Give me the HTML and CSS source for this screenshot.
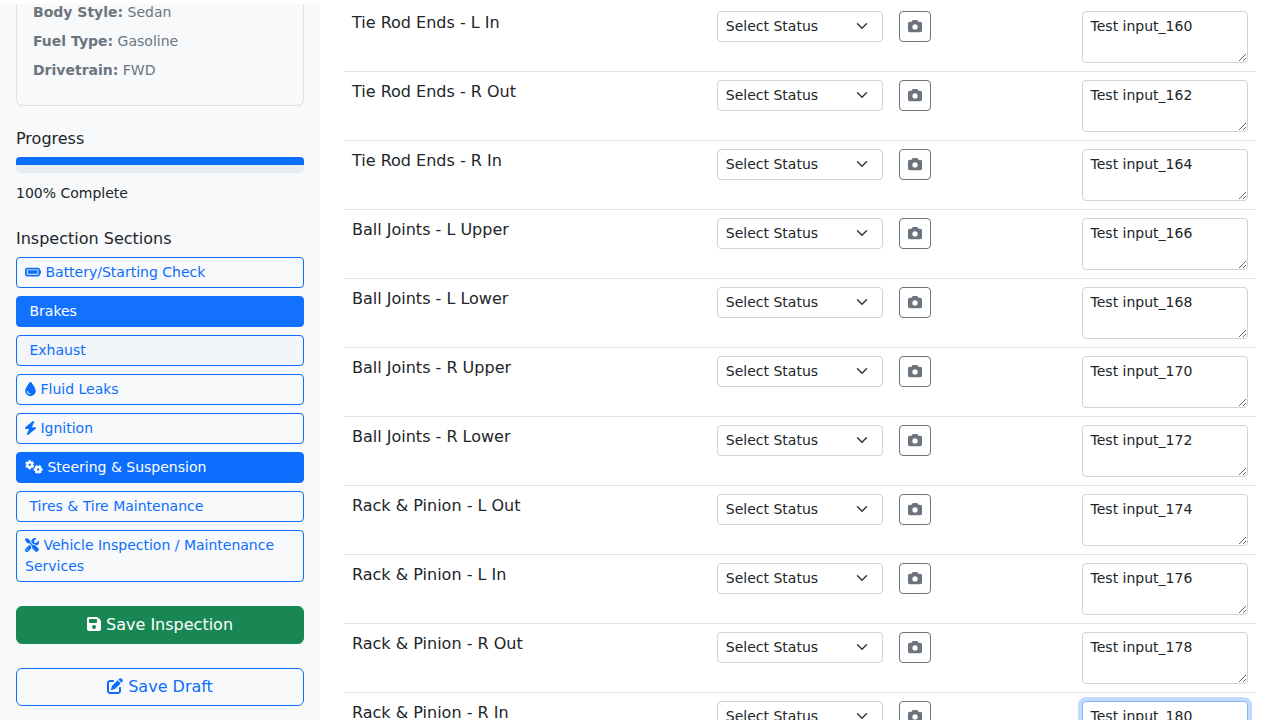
FILE: index.html
```html
<!DOCTYPE html>
<html lang="en">
<head>
<meta charset="utf-8">
<meta name="viewport" content="width=device-width, initial-scale=1">
<title>Vehicle Inspection</title>
<link rel="stylesheet" href="styles.css">
</head>
<body>
<svg class="sprite" aria-hidden="true">
  <symbol id="camera" viewBox="0 0 512 512"><path d="M149.1 64.8L138.7 96H64C28.7 96 0 124.7 0 160V416c0 35.3 28.7 64 64 64H448c35.3 0 64-28.7 64-64V160c0-35.3-28.7-64-64-64H373.3L362.9 64.8C356.4 45.2 338.1 32 317.4 32H194.6c-20.7 0-39 13.2-45.5 32.8zM256 192a96 96 0 1 1 0 192 96 96 0 1 1 0-192z"/></symbol>
</svg>
<div class="layout">
  <aside class="sidebar">
    <div class="vehicle-card">
      <p><strong>Body Style:</strong> Sedan</p>
      <p><strong>Fuel Type:</strong> Gasoline</p>
      <p><strong>Drivetrain:</strong> FWD</p>
    </div>
    <section class="progress-block">
      <h2 class="heading">Progress</h2>
      <div class="progress" role="progressbar" aria-label="Progress" aria-valuenow="100" aria-valuemin="0" aria-valuemax="100"><div class="progress-bar" style="width: 100%"></div></div>
      <div class="progress-text">100% Complete</div>
    </section>
    <section>
      <h2 class="heading">Inspection Sections</h2>
      <nav class="sections">
        <button type="button" class="section-btn"><svg class="icon icon-battery" viewBox="0 0 576 512" preserveAspectRatio="none"><path d="M464 160c8.8 0 16 7.2 16 16V336c0 8.8-7.2 16-16 16H80c-8.8 0-16-7.2-16-16V176c0-8.8 7.2-16 16-16H464zM80 96C35.8 96 0 131.8 0 176V336c0 44.2 35.8 80 80 80H464c44.2 0 80-35.8 80-80V320c17.7 0 32-14.3 32-32V224c0-17.7-14.3-32-32-32V176c0-44.2-35.8-80-80-80H80zm368 96H96V320H448V192z"/></svg> Battery/Starting Check</button>
        <button type="button" class="section-btn done">&nbsp;Brakes</button>
        <button type="button" class="section-btn hovered">&nbsp;Exhaust</button>
        <button type="button" class="section-btn"><svg class="icon icon-narrow" viewBox="0 0 384 512"><path d="M192 512C86 512 0 426 0 320C0 228.8 130.2 57.7 166.6 11.7C172.6 4.2 181.5 0 191.1 0h1.8c9.6 0 18.5 4.2 24.5 11.7C253.8 57.7 384 228.8 384 320c0 106-86 192-192 192zM96 336c0-8.8-7.2-16-16-16s-16 7.2-16 16c0 61.9 50.1 112 112 112c8.8 0 16-7.2 16-16s-7.2-16-16-16c-44.2 0-80-35.8-80-80z"/></svg> Fluid Leaks</button>
        <button type="button" class="section-btn"><svg class="icon icon-narrow" viewBox="32 0 384 512" preserveAspectRatio="none"><path d="M349.4 44.6c5.9-13.7 1.5-29.7-10.6-38.5s-28.6-8-39.9 1.8l-256 224c-10 8.8-13.6 22.9-8.9 35.3S50.7 288 64 288H175.5L98.6 467.4c-5.9 13.7-1.5 29.7 10.6 38.5s28.6 8 39.9-1.8l256-224c10-8.8 13.6-22.9 8.9-35.3s-16.6-20.7-30-20.7H272.5L349.4 44.6z"/></svg> Ignition</button>
        <button type="button" class="section-btn active"><svg class="icon icon-gears" viewBox="0 0 640 512"><g fill="none" stroke="currentColor"><circle cx="164" cy="170" r="86" stroke-width="84"/><path d="M164 58V6M164 282v52M261 114l42-24M67 226l-42 24M67 114L25 90M261 226l42 24" stroke-width="92"/><circle cx="472" cy="344" r="86" stroke-width="84"/><path d="M584 344h52M360 344h-52M528 247l24-42M416 441l-24 42M416 247l-24-42M528 441l24 42" stroke-width="92"/></g></svg> Steering &amp; Suspension</button>
        <button type="button" class="section-btn">&nbsp;Tires &amp; Tire Maintenance</button>
        <button type="button" class="section-btn"><svg class="icon icon-512" viewBox="0 0 512 512"><path d="M78.6 5C69.1-2.4 55.6-1.5 47 7L7 47c-8.5 8.5-9.4 22-2.1 31.6l80 104c4.5 5.9 11.6 9.4 19 9.4h54.1l109 109c-14.7 29-10 65.4 14.3 89.6l112 112c12.5 12.5 32.8 12.5 45.3 0l64-64c12.5-12.5 12.5-32.8 0-45.3l-112-112c-24.2-24.2-60.6-29-89.6-14.3l-109-109V104c0-7.5-3.5-14.5-9.4-19L78.6 5zM19.9 396.1C7.2 408.8 0 426.1 0 444.1C0 481.6 30.4 512 67.9 512c18 0 35.3-7.2 48-19.9L233.7 374.3c-7.8-20.9-9-43.6-3.6-65.1l-61.7-61.7L19.9 396.1zM512 144c0-10.5-1.1-20.7-3.2-30.5c-2.4-11.2-16.1-14.1-24.2-6l-63.9 63.9c-3 3-7.1 4.7-11.3 4.7H352c-8.8 0-16-7.2-16-16V102.6c0-4.2 1.7-8.3 4.7-11.3l63.9-63.9c8.1-8.1 5.2-21.8-6-24.2C388.7 1.1 378.5 0 368 0C288.5 0 224 64.5 224 144l0 .8 85.3 85.3c36-9.1 75.8 .5 104 28.7L429 274.5c49-23 83-72.8 83-130.5zM56 432a24 24 0 1 1 48 0 24 24 0 1 1 -48 0z"/></svg> Vehicle Inspection / Maintenance Services</button>
      </nav>
    </section>
    <button type="button" class="btn btn-success"><svg class="icon icon-448" viewBox="0 0 448 512"><path d="M64 32C28.7 32 0 60.7 0 96V416c0 35.3 28.7 64 64 64H384c35.3 0 64-28.7 64-64V173.3c0-17-6.7-33.3-18.7-45.3L352 50.7C340 38.7 323.7 32 306.7 32H64zm0 96c0-17.7 14.3-32 32-32H288c17.7 0 32 14.3 32 32v64c0 17.7-14.3 32-32 32H96c-17.7 0-32-14.3-32-32V128zM224 288a64 64 0 1 1 0 128 64 64 0 1 1 0-128z"/></svg> Save Inspection</button>
    <button type="button" class="btn btn-outline"><svg class="icon icon-512" viewBox="0 0 512 512"><path d="M471.6 21.7c-21.9-21.9-57.3-21.9-79.2 0L362.3 51.7l97.9 97.9 30.1-30.1c21.9-21.9 21.9-57.3 0-79.2L471.6 21.7zm-299.2 220c-6.1 6.1-10.8 13.6-13.5 21.9l-29.6 88.8c-2.9 8.6-.6 18.1 5.8 24.6s15.9 8.7 24.6 5.8l88.8-29.6c8.2-2.7 15.7-7.4 21.9-13.5L437.7 172.3 339.7 74.3 172.4 241.7zM96 64C43 64 0 107 0 160V416c0 53 43 96 96 96H352c53 0 96-43 96-96V320c0-17.7-14.3-32-32-32s-32 14.3-32 32v96c0 17.7-14.3 32-32 32H96c-17.7 0-32-14.3-32-32V160c0-17.7 14.3-32 32-32h96c17.7 0 32-14.3 32-32s-14.3-32-32-32H96z"/></svg> Save Draft</button>
  </aside>
  <main class="main">
    <table class="checks">
      <colgroup><col class="col-item"><col class="col-part"><col class="col-part"><col class="col-part"></colgroup>
      <tbody>
        <tr><td>Tie Rod Ends - L In</td><td><select class="status" aria-label="Tie Rod Ends - L In status"><option>Select Status</option></select></td><td><button type="button" class="photo" aria-label="Add photo"><svg class="icon icon-512"><use href="#camera"/></svg></button></td><td><textarea class="notes" rows="2" aria-label="Tie Rod Ends - L In notes">Test input_160</textarea></td></tr>
        <tr><td>Tie Rod Ends - R Out</td><td><select class="status" aria-label="Tie Rod Ends - R Out status"><option>Select Status</option></select></td><td><button type="button" class="photo" aria-label="Add photo"><svg class="icon icon-512"><use href="#camera"/></svg></button></td><td><textarea class="notes" rows="2" aria-label="Tie Rod Ends - R Out notes">Test input_162</textarea></td></tr>
        <tr><td>Tie Rod Ends - R In</td><td><select class="status" aria-label="Tie Rod Ends - R In status"><option>Select Status</option></select></td><td><button type="button" class="photo" aria-label="Add photo"><svg class="icon icon-512"><use href="#camera"/></svg></button></td><td><textarea class="notes" rows="2" aria-label="Tie Rod Ends - R In notes">Test input_164</textarea></td></tr>
        <tr><td>Ball Joints - L Upper</td><td><select class="status" aria-label="Ball Joints - L Upper status"><option>Select Status</option></select></td><td><button type="button" class="photo" aria-label="Add photo"><svg class="icon icon-512"><use href="#camera"/></svg></button></td><td><textarea class="notes" rows="2" aria-label="Ball Joints - L Upper notes">Test input_166</textarea></td></tr>
        <tr><td>Ball Joints - L Lower</td><td><select class="status" aria-label="Ball Joints - L Lower status"><option>Select Status</option></select></td><td><button type="button" class="photo" aria-label="Add photo"><svg class="icon icon-512"><use href="#camera"/></svg></button></td><td><textarea class="notes" rows="2" aria-label="Ball Joints - L Lower notes">Test input_168</textarea></td></tr>
        <tr><td>Ball Joints - R Upper</td><td><select class="status" aria-label="Ball Joints - R Upper status"><option>Select Status</option></select></td><td><button type="button" class="photo" aria-label="Add photo"><svg class="icon icon-512"><use href="#camera"/></svg></button></td><td><textarea class="notes" rows="2" aria-label="Ball Joints - R Upper notes">Test input_170</textarea></td></tr>
        <tr><td>Ball Joints - R Lower</td><td><select class="status" aria-label="Ball Joints - R Lower status"><option>Select Status</option></select></td><td><button type="button" class="photo" aria-label="Add photo"><svg class="icon icon-512"><use href="#camera"/></svg></button></td><td><textarea class="notes" rows="2" aria-label="Ball Joints - R Lower notes">Test input_172</textarea></td></tr>
        <tr><td>Rack &amp; Pinion - L Out</td><td><select class="status" aria-label="Rack &amp; Pinion - L Out status"><option>Select Status</option></select></td><td><button type="button" class="photo" aria-label="Add photo"><svg class="icon icon-512"><use href="#camera"/></svg></button></td><td><textarea class="notes" rows="2" aria-label="Rack &amp; Pinion - L Out notes">Test input_174</textarea></td></tr>
        <tr><td>Rack &amp; Pinion - L In</td><td><select class="status" aria-label="Rack &amp; Pinion - L In status"><option>Select Status</option></select></td><td><button type="button" class="photo" aria-label="Add photo"><svg class="icon icon-512"><use href="#camera"/></svg></button></td><td><textarea class="notes" rows="2" aria-label="Rack &amp; Pinion - L In notes">Test input_176</textarea></td></tr>
        <tr><td>Rack &amp; Pinion - R Out</td><td><select class="status" aria-label="Rack &amp; Pinion - R Out status"><option>Select Status</option></select></td><td><button type="button" class="photo" aria-label="Add photo"><svg class="icon icon-512"><use href="#camera"/></svg></button></td><td><textarea class="notes" rows="2" aria-label="Rack &amp; Pinion - R Out notes">Test input_178</textarea></td></tr>
        <tr><td>Rack &amp; Pinion - R In</td><td><select class="status" aria-label="Rack &amp; Pinion - R In status"><option>Select Status</option></select></td><td><button type="button" class="photo" aria-label="Add photo"><svg class="icon icon-512"><use href="#camera"/></svg></button></td><td><textarea class="notes focused" rows="2" aria-label="Rack &amp; Pinion - R In notes">Test input_180</textarea></td></tr>
      </tbody>
    </table>
  </main>
</div>
</body>
</html>
```
FILE: styles.css
```css
*,
*::before,
*::after {
  box-sizing: border-box;
}

body {
  margin: 0;
  background: #fff;
  color: #212529;
  font-family: "DejaVu Sans", sans-serif;
  font-size: 16px;
  line-height: 24px;
}

button,
select,
textarea {
  margin: 0;
  font-family: inherit;
}

button {
  cursor: pointer;
}

.sprite {
  display: none;
}

.layout {
  display: flex;
  height: 100vh;
  overflow: hidden;
}

/* Sidebar */
.sidebar {
  width: 25%;
  flex: none;
  margin-top: 4px;
  padding: 0 16px;
  background: #f8f9fb;
  overflow: hidden;
}

.vehicle-card {
  margin: -2px 0 23px;
  padding: 0 16px 16px;
  border: 1px solid #dee2e6;
  border-top: 0;
  border-radius: 0 0 6px 6px;
  color: #6c757d;
  font-size: 14px;
  line-height: 21px;
}

.vehicle-card p {
  margin: 0 0 8px;
}

.heading {
  margin: 0 0 8px;
  font-size: 16px;
  font-weight: 400;
  line-height: 20px;
}

.progress-block {
  margin-bottom: 24px;
}

.progress {
  height: 16px;
  margin-bottom: 8px;
  border-radius: 4px;
  background: #e9ecef;
  overflow: hidden;
}

.progress-bar {
  height: 8px;
  background: #0d6efd;
}

.progress-text {
  font-size: 14px;
}

.sections {
  display: flex;
  flex-direction: column;
  gap: 8px;
}

.section-btn {
  padding: 4px 8px;
  border: 1px solid #0d6efd;
  border-radius: 4px;
  background: transparent;
  color: #0d6efd;
  font-size: 14px;
  line-height: 21px;
  text-align: left;
}

.section-btn.active {
  background: #0d6efd;
  color: #fff;
}

.section-btn.done {
  border-color: #1371ff;
  background: #1371ff;
  color: #fff;
}

.section-btn.hovered {
  background: #f2f5fa;
}

.btn {
  display: block;
  width: 100%;
  margin-top: 24px;
  padding: 6px 12px;
  border: 1px solid #0d6efd;
  border-radius: 6px;
  font-size: 16px;
  line-height: 24px;
}

.btn-success {
  border-color: #198754;
  background: #198754;
  color: #fff;
}

.btn-outline {
  background: transparent;
  color: #0d6efd;
}

/* Icons are one em tall; the width follows the glyph's own grid */
.icon {
  display: inline-block;
  height: 1em;
  fill: currentColor;
  overflow: visible;
  vertical-align: -2px;
}

.icon-448 { width: 0.875em; }
.icon-512 { width: 1em; }
.icon-narrow { width: 11px; }
.icon-battery { width: 16px; }
.icon-gears { width: 18px; }

/* Checklist */
.main {
  flex: 1;
  min-width: 0;
  padding: 3px 24px 0;
}

.checks {
  width: 100%;
  table-layout: fixed;
  border-collapse: separate;
  border-spacing: 0;
}

.col-item { width: 40%; }
.col-part { width: 20%; }

.checks td {
  padding: 8px;
  border-bottom: 1px solid #dee2e6;
  vertical-align: top;
}

.status {
  display: block;
  width: 100%;
  padding: 4px 36px 4px 8px;
  border: 1px solid #ced4da;
  border-radius: 4px;
  appearance: none;
  background: #fff url("data:image/svg+xml,%3csvg xmlns='http://www.w3.org/2000/svg' viewBox='0 0 16 16'%3e%3cpath fill='none' stroke='%23343a40' stroke-linecap='round' stroke-linejoin='round' stroke-width='2' d='m2 5 6 6 6-6'/%3e%3c/svg%3e") no-repeat right 12px top 8px / 16px 12px;
  color: #212529;
  font-size: 14px;
  line-height: 21px;
}

.photo {
  display: block;
  padding: 4px 8px;
  border: 1px solid #6c757d;
  border-radius: 4px;
  background: transparent;
  color: #6c757d;
  font-size: 14px;
  line-height: 21px;
}

.notes {
  display: block;
  width: 100%;
  padding: 4px 8px;
  border: 1px solid #ced4da;
  border-radius: 4px;
  background: #fff;
  color: #212529;
  font-size: 14px;
  line-height: 21px;
  resize: vertical;
}

.notes.focused,
.notes:focus {
  border-color: #86b7fe;
  outline: 0;
  box-shadow: 0 0 0 4px rgba(13, 110, 253, 0.25);
}
```
